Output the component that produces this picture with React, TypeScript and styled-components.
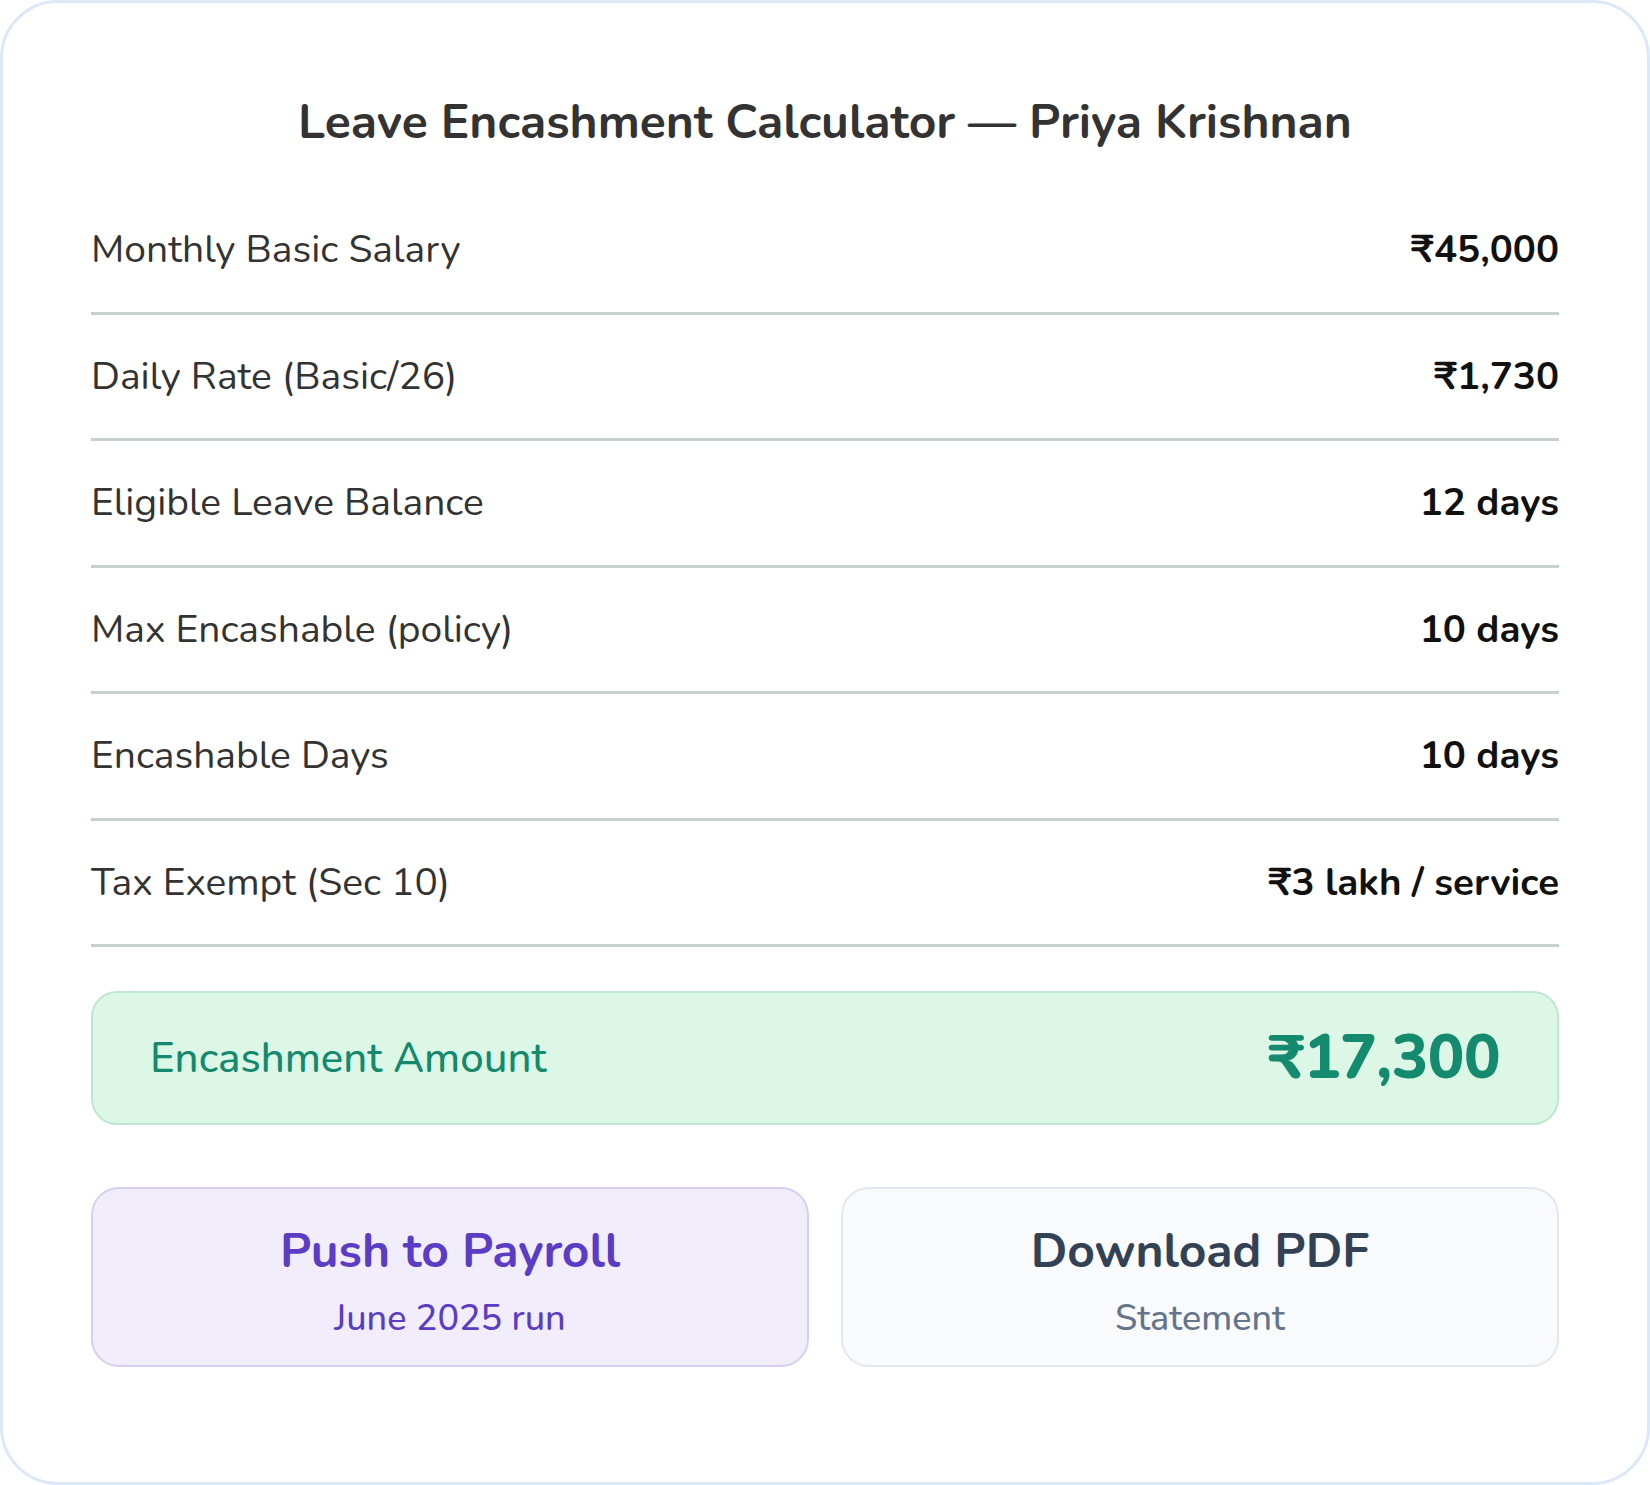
import React from "react";
import styled, { createGlobalStyle } from "styled-components";

const GlobalStyle = createGlobalStyle`
  html, body {
    margin: 0;
    padding: 0;
    background: #ffffff;
  }
  body {
    font-family: "Nunito", "Lato", "Noto Sans", sans-serif;
    -webkit-font-smoothing: antialiased;
  }
  * { box-sizing: border-box; }
`;

const Card = styled.div`
  width: 100%;
  min-height: 100vh;
  background: #ffffff;
  border: 3px solid #dce7f7;
  border-radius: 58px;
  padding: 90px 88px 88px;
  display: flex;
  flex-direction: column;
`;

const Title = styled.h1`
  margin: 0 0 37px;
  text-align: center;
  font-size: 48px;
  line-height: 58px;
  font-weight: 700;
  color: #333333;
`;

const Rows = styled.div`
  display: flex;
  flex-direction: column;
`;

const Row = styled.div`
  display: flex;
  justify-content: space-between;
  align-items: center;
  padding: 38px 0 38.5px;
  border-bottom: 3px solid #c6d0d1;
`;

const Label = styled.span`
  font-size: 39px;
  line-height: 47px;
  color: #333333;
  font-weight: 400;
`;

const Value = styled.span`
  font-size: 38.5px;
  line-height: 47px;
  color: #111111;
  font-weight: 700;
`;

const TotalBox = styled.div`
  margin-top: 44px;
  height: 134px;
  display: flex;
  justify-content: space-between;
  align-items: center;
  padding: 0 57px;
  background: #dcf7e5;
  border: 2px solid #bfe6d4;
  border-radius: 26px;
`;

const TotalLabel = styled.span`
  font-size: 42px;
  font-weight: 500;
  color: #15896d;
`;

const TotalValue = styled.span`
  font-size: 61px;
  font-weight: 800;
  color: #148a6e;
  letter-spacing: -0.5px;
`;

const Actions = styled.div`
  margin-top: 62px;
  display: grid;
  grid-template-columns: 1fr 1fr;
  gap: 32px;
`;

const ActionButton = styled.button<{ $variant: "primary" | "secondary" }>`
  height: 180px;
  border-radius: 28px;
  border: 2px solid ${(p) => (p.$variant === "primary" ? "#d8cff0" : "#e3e8f0")};
  background: ${(p) => (p.$variant === "primary" ? "#f1edfa" : "#f8fafc")};
  display: flex;
  flex-direction: column;
  align-items: center;
  justify-content: center;
  gap: 19px;
  font-family: inherit;
  cursor: pointer;
  padding: 8px 0 0;
`;

const ActionTitle = styled.span<{ $variant: "primary" | "secondary" }>`
  font-size: 48px;
  line-height: 56px;
  font-weight: 700;
  color: ${(p) => (p.$variant === "primary" ? "#5b3cc4" : "#334155")};
`;

const ActionSub = styled.span<{ $variant: "primary" | "secondary" }>`
  font-size: 36px;
  line-height: 42px;
  font-weight: 500;
  color: ${(p) => (p.$variant === "primary" ? "#5b3cc4" : "#64748b")};
`;

const rows: [string, string][] = [
  ["Monthly Basic Salary", "₹45,000"],
  ["Daily Rate (Basic/26)", "₹1,730"],
  ["Eligible Leave Balance", "12 days"],
  ["Max Encashable (policy)", "10 days"],
  ["Encashable Days", "10 days"],
  ["Tax Exempt (Sec 10)", "₹3 lakh / service"],
];

export default function App() {
  return (
    <>
      <GlobalStyle />
      <Card>
        <Title>Leave Encashment Calculator — Priya Krishnan</Title>
        <Rows>
          {rows.map(([label, value]) => (
            <Row key={label}>
              <Label>{label}</Label>
              <Value>{value}</Value>
            </Row>
          ))}
        </Rows>
        <TotalBox>
          <TotalLabel>Encashment Amount</TotalLabel>
          <TotalValue>₹17,300</TotalValue>
        </TotalBox>
        <Actions>
          <ActionButton $variant="primary">
            <ActionTitle $variant="primary">Push to Payroll</ActionTitle>
            <ActionSub $variant="primary">June 2025 run</ActionSub>
          </ActionButton>
          <ActionButton $variant="secondary">
            <ActionTitle $variant="secondary">Download PDF</ActionTitle>
            <ActionSub $variant="secondary">Statement</ActionSub>
          </ActionButton>
        </Actions>
      </Card>
    </>
  );
}
